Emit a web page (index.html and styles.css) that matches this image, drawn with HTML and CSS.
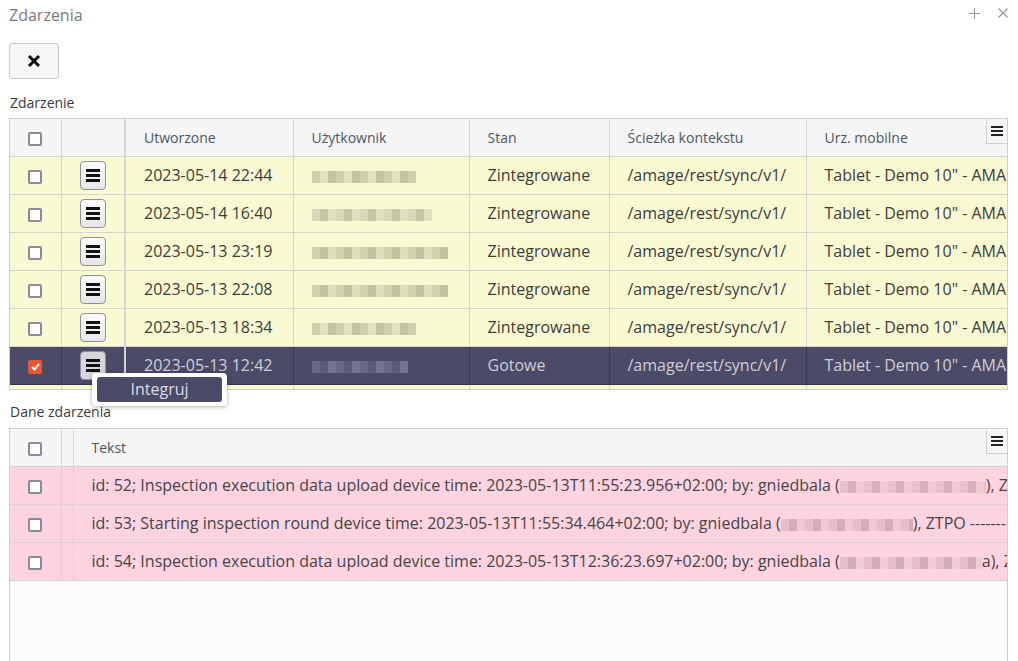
FILE: index.html
```html
<!DOCTYPE html>
<html lang="pl">
<head>
    <meta charset="UTF-8">
    <title>Zdarzenia</title>
    <link rel="stylesheet" href="styles.css">
</head>
<body>
    <div class="page">
        <div class="titlebar">
            <span class="title">Zdarzenia</span>
            <div class="win-tools">
                <svg width="11" height="11" viewBox="0 0 11 11"><path d="M5.5 0v11M0 5.5h11" stroke="#9a9a9a" stroke-width="1.2"/></svg>
                <svg width="10" height="10" viewBox="0 0 10 10"><path d="M0.5 0.5l9 9M9.5 0.5l-9 9" stroke="#9a9a9a" stroke-width="1.2"/></svg>
            </div>
        </div>

        <button class="close-btn">
            <svg width="14" height="14" viewBox="0 0 14 14"><path d="M2 2l10 10M12 2L2 12" stroke="#111" stroke-width="3"/></svg>
        </button>

        <div class="section-label">Zdarzenie</div>
        <div class="grid-wrap events">
            <table class="grid">
                <colgroup>
                    <col style="width:51px"><col style="width:64px"><col style="width:168px">
                    <col style="width:176px"><col style="width:140px"><col style="width:197px"><col style="width:260px">
                </colgroup>
                <thead>
                    <tr>
                        <th class="c-chk"><span class="chk"></span></th>
                        <th class="c-menu"></th>
                        <th>Utworzone</th>
                        <th>Użytkownik</th>
                        <th>Stan</th>
                        <th>Ścieżka kontekstu</th>
                        <th>Urz. mobilne</th>
                    </tr>
                </thead>
                <tbody>
                    <tr class="row-new">
                        <td class="c-chk"><span class="chk"></span></td>
                        <td class="c-menu"><span class="menu-btn"><i></i><i></i><i></i></span></td>
                        <td>2023-05-14 22:44</td>
                        <td><span class="blur b1"></span></td>
                        <td>Zintegrowane</td>
                        <td>/amage/rest/sync/v1/</td>
                        <td>Tablet - Demo 10" - AMAGE</td>
                    </tr>
                    <tr class="row-new">
                        <td class="c-chk"><span class="chk"></span></td>
                        <td class="c-menu"><span class="menu-btn"><i></i><i></i><i></i></span></td>
                        <td>2023-05-14 16:40</td>
                        <td><span class="blur b2"></span></td>
                        <td>Zintegrowane</td>
                        <td>/amage/rest/sync/v1/</td>
                        <td>Tablet - Demo 10" - AMAGE</td>
                    </tr>
                    <tr class="row-new">
                        <td class="c-chk"><span class="chk"></span></td>
                        <td class="c-menu"><span class="menu-btn"><i></i><i></i><i></i></span></td>
                        <td>2023-05-13 23:19</td>
                        <td><span class="blur b3"></span></td>
                        <td>Zintegrowane</td>
                        <td>/amage/rest/sync/v1/</td>
                        <td>Tablet - Demo 10" - AMAGE</td>
                    </tr>
                    <tr class="row-new">
                        <td class="c-chk"><span class="chk"></span></td>
                        <td class="c-menu"><span class="menu-btn"><i></i><i></i><i></i></span></td>
                        <td>2023-05-13 22:08</td>
                        <td><span class="blur b3"></span></td>
                        <td>Zintegrowane</td>
                        <td>/amage/rest/sync/v1/</td>
                        <td>Tablet - Demo 10" - AMAGE</td>
                    </tr>
                    <tr class="row-new">
                        <td class="c-chk"><span class="chk"></span></td>
                        <td class="c-menu"><span class="menu-btn"><i></i><i></i><i></i></span></td>
                        <td>2023-05-13 18:34</td>
                        <td><span class="blur b1"></span></td>
                        <td>Zintegrowane</td>
                        <td>/amage/rest/sync/v1/</td>
                        <td>Tablet - Demo 10" - AMAGE</td>
                    </tr>
                    <tr class="row-selected">
                        <td class="c-chk"><span class="chk checked">
                            <svg width="9" height="8" viewBox="0 0 9 8"><path d="M1 4l2.5 2.5L8 1" stroke="#fff" stroke-width="2" fill="none"/></svg>
                        </span></td>
                        <td class="c-menu"><span class="menu-btn pressed"><i></i><i></i><i></i></span></td>
                        <td>2023-05-13 12:42</td>
                        <td><span class="blur b4"></span></td>
                        <td>Gotowe</td>
                        <td>/amage/rest/sync/v1/</td>
                        <td>Tablet - Demo 10" - AMAGE</td>
                    </tr>
                    <tr class="row-new">
                        <td class="c-chk"><span class="chk"></span></td>
                        <td class="c-menu"></td>
                        <td>2023-05-13 12:30</td>
                        <td></td>
                        <td>Zintegrowane</td>
                        <td>/amage/rest/sync/v1/</td>
                        <td>Tablet - Demo 10" - AMAGE</td>
                    </tr>
                </tbody>
            </table>
            <span class="col-menu">
                <svg width="12" height="10" viewBox="0 0 12 10"><path d="M0 1h12M0 5h12M0 9h12" stroke="#222" stroke-width="2"/></svg>
            </span>
        </div>

        <div class="popup">
            <button class="popup-item">Integruj</button>
        </div>

        <div class="section-label second">Dane zdarzenia</div>
        <div class="grid-wrap details">
            <table class="grid">
                <colgroup>
                    <col style="width:51px"><col style="width:12px"><col style="width:1100px">
                </colgroup>
                <thead>
                    <tr>
                        <th class="c-chk"><span class="chk"></span></th>
                        <th></th>
                        <th>Tekst</th>
                    </tr>
                </thead>
                <tbody>
                    <tr class="row-data">
                        <td class="c-chk"><span class="chk"></span></td>
                        <td></td>
                        <td>id: 52; Inspection execution data upload device time: 2023-05-13T11:55:23.956+02:00; by: gniedbala (<span class="blur p1"></span>), ZTPO -----------</td>
                    </tr>
                    <tr class="row-data">
                        <td class="c-chk"><span class="chk"></span></td>
                        <td></td>
                        <td>id: 53; Starting inspection round device time: 2023-05-13T11:55:34.464+02:00; by: gniedbala (<span class="blur p2"></span>), ZTPO -----------</td>
                    </tr>
                    <tr class="row-data">
                        <td class="c-chk"><span class="chk"></span></td>
                        <td></td>
                        <td>id: 54; Inspection execution data upload device time: 2023-05-13T12:36:23.697+02:00; by: gniedbala (<span class="blur p3"></span>a), ZTPO -----------</td>
                    </tr>
                </tbody>
            </table>
            <span class="col-menu">
                <svg width="12" height="10" viewBox="0 0 12 10"><path d="M0 1h12M0 5h12M0 9h12" stroke="#222" stroke-width="2"/></svg>
            </span>
        </div>
    </div>
</body>
</html>
```

FILE: styles.css
```css
* {
    box-sizing: border-box;
}

body {
    margin: 0;
    font-family: 'Open Sans', sans-serif;
    color: #3c3c3c;
    background: #fff;
    overflow: hidden;
}

.page {
    position: relative;
    padding: 0 10px 0 9px;
    height: 661px;
}

.titlebar {
    display: flex;
    justify-content: space-between;
    align-items: center;
    height: 30px;
}

.title {
    font-size: 16px;
    color: #7a7a7a;
}

.win-tools {
    display: flex;
    gap: 18px;
    align-items: center;
    margin-top: -4px;
}

.close-btn {
    display: flex;
    align-items: center;
    justify-content: center;
    width: 50px;
    height: 36px;
    margin-top: 13px;
    border: 1px solid #c8c8c8;
    border-radius: 3px;
    background: #f6f6f6;
    padding: 0;
}

.section-label {
    font-size: 14px;
    line-height: 19px;
    color: #3a3a3a;
    margin: 14px 0 6px 1px;
}

.section-label.second {
    margin-top: 12px;
    margin-bottom: 7px;
}

.grid-wrap {
    position: relative;
    border: 1px solid #cfcfcf;
    overflow: hidden;
    width: 999px;
}

.events {
    height: 272px;
}

.details {
    height: 240px;
    background: #fcfcfc;
}

.grid {
    table-layout: fixed;
    border-collapse: collapse;
    width: max-content;
}

.grid th {
    height: 37px;
    font-size: 14px;
    font-weight: normal;
    text-align: left;
    color: #4d5563;
    background: #f5f5f5;
    padding: 0 18px;
    border-right: 1px solid #d4d4d4;
    border-bottom: 1px solid #d4d4d4;
    white-space: nowrap;
}

.grid td {
    height: 38px;
    font-size: 16px;
    padding: 0 18px;
    border-right: 1px solid #d4d4d4;
    border-bottom: 1px solid #d4d4d4;
    white-space: nowrap;
    overflow: hidden;
}

.grid .c-chk,
.grid .c-menu {
    padding: 0;
    text-align: center;
}

.grid .c-menu {
    border-right: 2px solid #d4d4d4;
}

.details .grid td.c-chk,
.details .grid th.c-chk,
.details .grid td:nth-child(2),
.details .grid th:nth-child(2) {
    padding: 0;
}

.row-new td {
    background: #fafad2;
}

.row-selected td {
    background: #4b4a67;
    color: #cfcfd6;
    border-bottom-color: #34334a;
    border-right-color: #3b3a55;
}

.row-data td {
    background: #ffd3df;
    color: #454545;
}

.chk {
    display: inline-flex;
    align-items: center;
    justify-content: center;
    width: 14px;
    height: 14px;
    border: 2px solid #8a8a98;
    border-radius: 2px;
    background: #fff;
    vertical-align: middle;
}

.chk.checked {
    background: #f0542a;
    border-color: #f0542a;
}

.menu-btn {
    display: inline-flex;
    flex-direction: column;
    justify-content: center;
    align-items: center;
    gap: 2px;
    width: 26px;
    height: 29px;
    border: 1px solid #8f8f9a;
    border-radius: 4px;
    background: linear-gradient(#fbfbfb, #e6e6e6);
    vertical-align: middle;
}

.menu-btn i {
    display: block;
    width: 14px;
    height: 3px;
    background: #111;
}

.menu-btn.pressed {
    background: #d6d6d8;
}

.col-menu {
    position: absolute;
    top: 0;
    right: 0;
    width: 21px;
    height: 25px;
    display: flex;
    align-items: center;
    justify-content: center;
    background: #f5f5f5;
    border-left: 1px solid #cfcfcf;
    border-bottom: 1px solid #cfcfcf;
}

.blur {
    display: inline-block;
    height: 12px;
    vertical-align: middle;
    filter: blur(0.6px);
}

.b1 { width: 104px; background: repeating-linear-gradient(90deg, #cfcfae 0 8px, #e2e2c2 8px 16px, #c4c4a2 16px 24px); }
.b2 { width: 120px; background: repeating-linear-gradient(90deg, #d8d8b8 0 8px, #c6c6a4 8px 16px, #e0e0c0 16px 24px); }
.b3 { width: 136px; background: repeating-linear-gradient(90deg, #d2d2b0 0 8px, #c2c2a0 8px 16px, #dedebe 16px 24px); }
.b4 { width: 96px; background: repeating-linear-gradient(90deg, #6a6984 0 8px, #5c5b78 8px 16px, #75748e 16px 24px); }
.p1 { width: 146px; background: repeating-linear-gradient(90deg, #e8c0cc 0 8px, #d8afbc 8px 16px, #f0cad5 16px 24px); }
.p2 { width: 132px; background: repeating-linear-gradient(90deg, #e6bdca 0 8px, #d6acb9 8px 16px, #efc8d3 16px 24px); }
.p3 { width: 142px; background: repeating-linear-gradient(90deg, #e8c0cc 0 8px, #d3aab7 8px 16px, #f1cbd6 16px 24px); }

.popup {
    position: absolute;
    left: 92px;
    top: 373px;
    padding: 4px 5px;
    background: #fff;
    border-radius: 4px;
    box-shadow: 0 1px 4px rgba(0, 0, 0, 0.3);
    z-index: 2;
}

.popup-item {
    display: block;
    width: 125px;
    height: 25px;
    border: none;
    border-radius: 3px;
    background: #4b4a67;
    color: #dcdce4;
    font-family: 'Open Sans', sans-serif;
    font-size: 16px;
    line-height: 25px;
    padding: 0;
}
```
